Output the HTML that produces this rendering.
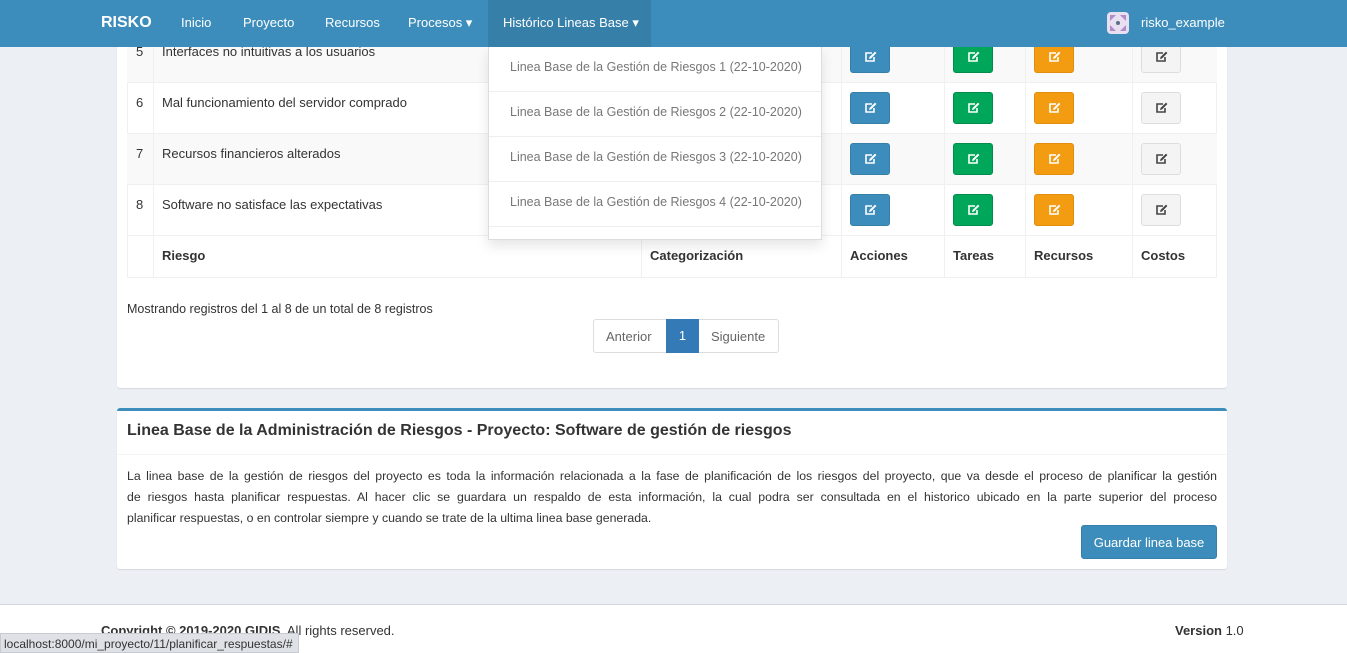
<!DOCTYPE html>
<html><head><meta charset="utf-8"><style>
*{box-sizing:border-box;margin:0;padding:0}
body{width:1347px;height:653px;overflow:hidden;background:#ecf0f5;font-family:"Liberation Sans",sans-serif;color:#333;font-size:13px;position:relative}
.abs{position:absolute}
.nav{left:0;top:0;width:1347px;height:47px;background:#3c8dbc;color:#fff;z-index:5}
.nav span{position:absolute;top:15px;font-size:13px}
.box{background:#fff;border-radius:3px;box-shadow:0 1px 1px rgba(0,0,0,.1)}
.row{left:127px;width:1090px;height:51px;border-bottom:1px solid #f0f0f0}
.btn{position:absolute;width:40px;height:32px;border-radius:3px;display:flex;align-items:center;justify-content:center}
.dd{left:488px;top:47px;width:334px;height:193px;background:#fff;border:1px solid #ddd;border-top:none;z-index:4;box-shadow:0 6px 12px rgba(0,0,0,.1)}
.dd div{height:45px;border-bottom:1px solid #eee;padding:13px 0 0 21px;color:#777;font-size:12.5px}
.line{text-align:justify;text-align-last:justify;white-space:nowrap;height:21px}
</style></head><body>
<div class="abs nav">
<span style="left:101px;font-weight:bold;font-size:16px;top:14px">RISKO</span>
<span style="left:181px">Inicio</span>
<span style="left:243px">Proyecto</span>
<span style="left:325px">Recursos</span>
<span style="left:408px">Procesos ▾</span>
<div class="abs" style="left:488px;top:0;width:163px;height:47px;background:#367fa9"></div>
<span style="left:503px">Histórico Lineas Base ▾</span>
<svg class="abs" style="left:1107px;top:12px" width="22" height="22"><rect width="22" height="22" rx="4" fill="#e8dff0"/><path d="M3 3h6l-6 6zM19 3h-6l6 6zM3 19h6l-6-6zM19 19h-6l6-6z" fill="#b08cc8"/><circle cx="11" cy="11" r="2" fill="#5a6f8a"/></svg>
<span style="left:1141px">risko_example</span>
</div>

<div class="abs box" style="left:117px;top:20px;width:1110px;height:368px"></div>
<div class="abs" style="left:127px;top:32px;width:1090px;height:246px;border:1px solid #f0f0f0;border-top:none"></div>
<div class="abs row" style="top:32px;background:#f9f9f9"></div>
<div class="abs row" style="top:83px"></div>
<div class="abs row" style="top:134px;background:#f9f9f9"></div>
<div class="abs row" style="top:185px"></div>
<div class="abs" style="left:127px;top:236px;width:1090px;height:42px;border-bottom:1px solid #f0f0f0"></div>
<div class="abs" style="left:153px;top:32px;width:1px;height:246px;background:#f0f0f0"></div>
<div class="abs" style="left:641px;top:32px;width:1px;height:246px;background:#f0f0f0"></div>
<div class="abs" style="left:841px;top:32px;width:1px;height:246px;background:#f0f0f0"></div>
<div class="abs" style="left:944px;top:32px;width:1px;height:246px;background:#f0f0f0"></div>
<div class="abs" style="left:1025px;top:32px;width:1px;height:246px;background:#f0f0f0"></div>
<div class="abs" style="left:1132px;top:32px;width:1px;height:246px;background:#f0f0f0"></div>
<div class="abs" style="left:136px;top:44px">5</div><div class="abs" style="left:162px;top:44px">Interfaces no intuitivas a los usuarios</div>
<div class="abs" style="left:136px;top:95px">6</div><div class="abs" style="left:162px;top:95px">Mal funcionamiento del servidor comprado</div>
<div class="abs" style="left:136px;top:146px">7</div><div class="abs" style="left:162px;top:146px">Recursos financieros alterados</div>
<div class="abs" style="left:136px;top:197px">8</div><div class="abs" style="left:162px;top:197px">Software no satisface las expectativas</div>
<div class="abs" style="top:248px;left:162px;font-weight:bold">Riesgo</div>
<div class="abs" style="top:248px;left:650px;font-weight:bold">Categorización</div>
<div class="abs" style="top:248px;left:850px;font-weight:bold">Acciones</div>
<div class="abs" style="top:248px;left:953px;font-weight:bold">Tareas</div>
<div class="abs" style="top:248px;left:1034px;font-weight:bold">Recursos</div>
<div class="abs" style="top:248px;left:1141px;font-weight:bold">Costos</div>
<div id="btns"></div>
<script>
var ys=[41,92,143,194],xs=[[850,'#3c8dbc','#367fa9','#fff'],[953,'#00a65a','#008d4c','#fff'],[1034,'#f39c12','#e08e0b','#fff'],[1141,'#f4f4f4','#ddd','#444']];
var h='';ys.forEach(function(y){xs.forEach(function(b){h+='<div class="btn" style="left:'+b[0]+'px;top:'+y+'px;background:'+b[1]+';border:1px solid '+b[2]+'"><svg width="13" height="12" viewBox="0 0 13 12"><path d="M8 2H2v8h8V6" fill="none" stroke="'+b[3]+'" stroke-width="1.6"/><path d="M5 8l.5-2L11 0.6l1.4 1.4L7 7.5z" fill="'+b[3]+'"/></svg></div>'})});
document.getElementById('btns').innerHTML=h;
</script>
<div class="abs dd">
<div>Linea Base de la Gestión de Riesgos 1 (22-10-2020)</div>
<div>Linea Base de la Gestión de Riesgos 2 (22-10-2020)</div>
<div>Linea Base de la Gestión de Riesgos 3 (22-10-2020)</div>
<div>Linea Base de la Gestión de Riesgos 4 (22-10-2020)</div>
</div>
<div class="abs" style="left:127px;top:302px;font-size:12.5px">Mostrando registros del 1 al 8 de un total de 8 registros</div>
<div class="abs" style="left:593px;top:319px;width:186px;height:34px;border:1px solid #ddd;border-radius:3px;font-size:13px;color:#666">
<span class="abs" style="left:12px;top:9px">Anterior</span>
<div class="abs" style="left:72px;top:-1px;width:33px;height:34px;background:#337ab7;color:#fff;text-align:center;padding-top:9px">1</div>
<span class="abs" style="left:117px;top:9px">Siguiente</span>
</div>

<div class="abs box" style="left:117px;top:408px;width:1110px;height:161px;border-top:3px solid #3c8dbc"></div>
<div class="abs" style="left:127px;top:422px;font-size:16px;font-weight:bold">Linea Base de la Administración de Riesgos - Proyecto: Software de gestión de riesgos</div>
<div class="abs" style="left:117px;top:454px;width:1110px;height:1px;background:#f4f4f4"></div>
<div class="abs" style="left:127px;top:466px;width:1090px;font-size:12.3px;line-height:21px">
<div class="line">La linea base de la gestión de riesgos del proyecto es toda la información relacionada a la fase de planificación de los riesgos del proyecto, que va desde el proceso de planificar la gestión</div>
<div class="line">de riesgos hasta planificar respuestas. Al hacer clic se guardara un respaldo de esta información, la cual podra ser consultada en el historico ubicado en la parte superior del proceso</div>
<div style="white-space:nowrap">planificar respuestas, o en controlar siempre y cuando se trate de la ultima linea base generada.</div>
</div>
<div class="abs" style="left:1081px;top:525px;width:136px;height:34px;background:#3c8dbc;border:1px solid #367fa9;border-radius:3px;color:#fff;text-align:center;padding-top:9px;font-size:13px">Guardar linea base</div>

<div class="abs" style="left:0;top:604px;width:1347px;height:49px;background:#fff;border-top:1px solid #d2d6de"></div>
<div class="abs" style="left:101px;top:623px;font-size:13px"><b>Copyright © 2019-2020 GIDIS.</b> All rights reserved.</div>
<div class="abs" style="left:1175px;top:623px;font-size:13px"><b>Version</b> 1.0</div>
<div class="abs" style="left:0;top:633px;width:299px;height:20px;background:#dee1e6;border:1px solid #c8ccd2;font-size:12px;padding:3px 0 0 3px;color:#333;white-space:nowrap;overflow:hidden">localhost:8000/mi_proyecto/11/planificar_respuestas/#</div>
</body></html>
